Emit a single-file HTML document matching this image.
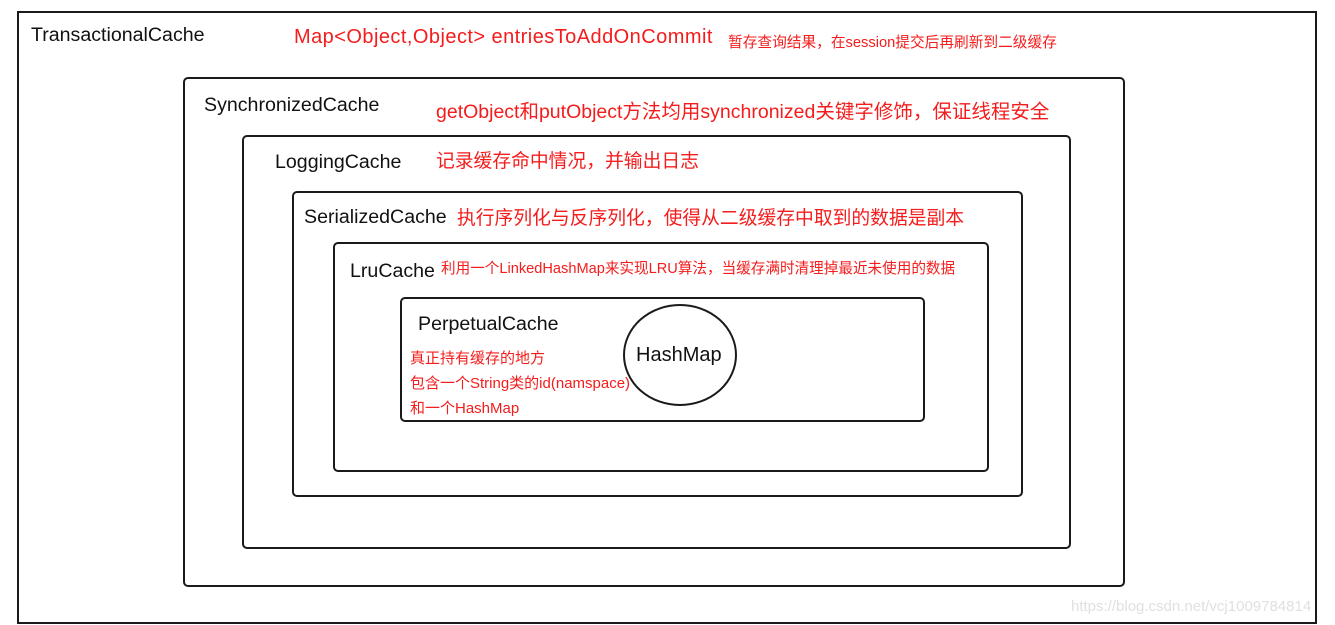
<!DOCTYPE html>
<html><head><meta charset="utf-8"><style>
body{margin:0;width:1335px;height:625px;background:#fff;position:relative;overflow:hidden;font-family:"Liberation Sans","Noto Sans CJK SC",sans-serif}
.b{position:absolute;border:2px solid #1a1a1a;border-radius:5px;box-sizing:border-box}
.t{position:absolute;white-space:nowrap;color:#111;font-size:19.6px}
.r{position:absolute;white-space:nowrap;color:#f41c1c}
</style></head><body>
<div class="b" style="left:17px;top:11px;width:1300px;height:613px;border-radius:0"></div>
<div class="b" style="left:183px;top:77px;width:942px;height:510px"></div>
<div class="b" style="left:242px;top:135px;width:829px;height:414px"></div>
<div class="b" style="left:292px;top:191px;width:731px;height:306px"></div>
<div class="b" style="left:333px;top:242px;width:656px;height:230px"></div>
<div class="b" style="left:400px;top:297px;width:525px;height:125px"></div>
<svg style="position:absolute;left:0;top:0" width="1335" height="625"><ellipse cx="680" cy="355" rx="56" ry="50" fill="none" stroke="#1a1a1a" stroke-width="2"/></svg>
<div class="t" style="left:31px;top:24px">TransactionalCache</div>
<div class="r" style="left:294px;top:26px;font-size:20px;letter-spacing:0.45px">Map&lt;Object,Object&gt; entriesToAddOnCommit</div>
<div class="r" style="left:728px;top:31px;font-size:14.7px">暂存查询结果，在session提交后再刷新到二级缓存</div>
<div class="t" style="left:204px;top:94px">SynchronizedCache</div>
<div class="r" style="left:436px;top:95px;font-size:19.5px">getObject和putObject方法均用synchronized关键字修饰，保证线程安全</div>
<div class="t" style="left:275px;top:151px">LoggingCache</div>
<div class="r" style="left:436px;top:146px;font-size:18.8px">记录缓存命中情况，并输出日志</div>
<div class="t" style="left:304px;top:206px">SerializedCache</div>
<div class="r" style="left:457px;top:203px;font-size:18.8px">执行序列化与反序列化，使得从二级缓存中取到的数据是副本</div>
<div class="t" style="left:350px;top:260px">LruCache</div>
<div class="r" style="left:441px;top:257px;font-size:14.6px">利用一个LinkedHashMap来实现LRU算法，当缓存满时清理掉最近未使用的数据</div>
<div class="t" style="left:418px;top:313px">PerpetualCache</div>
<div class="r" style="left:410px;top:347px;font-size:15px">真正持有缓存的地方</div>
<div class="r" style="left:410px;top:372px;font-size:15px">包含一个String类的id(namspace)</div>
<div class="r" style="left:410px;top:397px;font-size:15px">和一个HashMap</div>
<div class="t" style="left:636px;top:344px;font-size:20px">HashMap</div>
<div style="position:absolute;left:1071px;top:598px;font-size:15px;color:#e0e0e0;white-space:nowrap">https://blog.csdn.net/vcj1009784814</div>
</body></html>
